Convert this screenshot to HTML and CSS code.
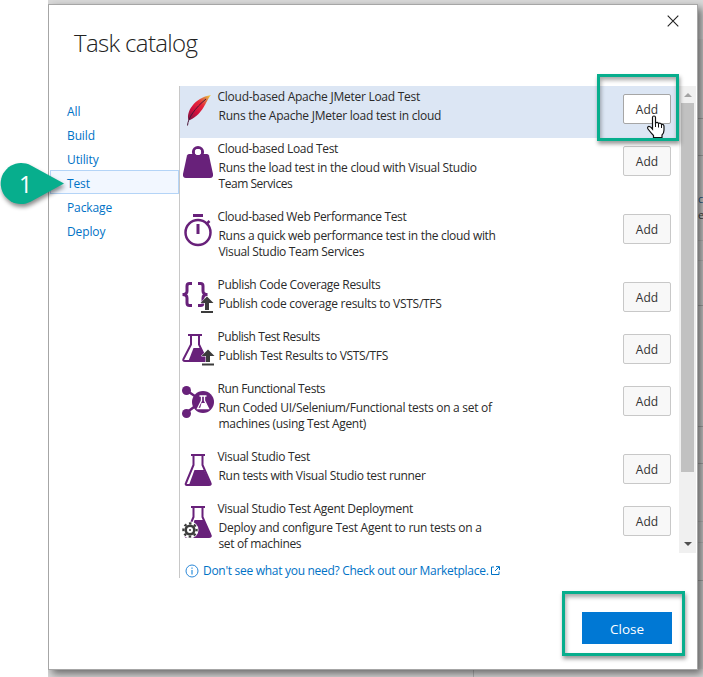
FILE: index.html
```html
<!DOCTYPE html>
<html lang="en">
<head>
<meta charset="utf-8">
<title>Task catalog</title>
<link rel="stylesheet" href="styles.css">
</head>
<body>
<div class="backdrop">
  <i class="shade"></i>
  <i class="rule r2"></i><i class="rule r3"></i><i class="rule soft r4"></i><i class="rule soft r5"></i><i class="rule r6"></i><i class="rule r7"></i><i class="rule r8"></i><i class="rule soft r9"></i><i class="rule soft r10"></i><i class="rule r11"></i>
  <i class="vrule"></i>
  <span class="peek p1">c</span><span class="peek p2">e</span>
</div>
<main class="dialog">
  <header class="head">
    <h1>Task catalog</h1>
    <svg class="x" viewBox="0 0 12 12" width="12" height="12"><path d="M.7.7l10.6 10.6M11.3.7L.7 11.3" stroke="#222" stroke-width="1.1"/></svg>
  </header>
  <div class="body">
    <nav class="nav">
      <a>All</a><a>Build</a><a>Utility</a><a class="on">Test</a><a>Package</a><a>Deploy</a>
    </nav>
    <section class="content">
      <div class="scroller">
        <div class="list">
          <article class="row hot">
            <svg class="icon" viewBox="0 0 36 44"><defs><linearGradient id="f" gradientUnits="userSpaceOnUse" x1="9" y1="34" x2="31" y2="9"><stop offset="0" stop-color="#7a1745"/><stop offset=".3" stop-color="#d00f3c"/><stop offset=".6" stop-color="#e8283a"/><stop offset=".8" stop-color="#dc7a45"/><stop offset="1" stop-color="#f6d83c"/></linearGradient></defs><path d="M8.500 34C6 26 14 12 31 9C25 16 24 27 10 34Z" fill="url(#f)"/><path d="M7.500 39.500C8 32 15 22 26 13" fill="none" stroke="#4b1638" stroke-width="1"/></svg>
            <div class="text"><h2 class="a1">Cloud-based Apache JMeter Load Test</h2><p><span class="b1">Runs the Apache JMeter load test in cloud</span></p></div>
            <button>Add</button>
          </article>
          <article class="row tall">
            <svg class="icon" viewBox="0 0 36 44"><circle cx="18" cy="14" r="4.600" fill="none" stroke="#68217a" stroke-width="3"/><path d="M9 16H27Q28.500 16 29 17.500L33 36Q33.500 40 30 40H6Q2.500 40 3 36L7 17.500Q7.500 16 9 16Z" fill="#68217a"/><circle cx="18" cy="14" r="3.100" fill="#fff"/></svg>
            <div class="text"><h2 class="a2">Cloud-based Load Test</h2><p><span class="b2">Runs the load test in the cloud with Visual Studio</span><br><span class="c2">Team Services</span></p></div>
            <button>Add</button>
          </article>
          <article class="row tall">
            <svg class="icon" viewBox="0 0 36 44"><circle cx="18" cy="26.500" r="12.500" fill="none" stroke="#68217a" stroke-width="2.500"/><path d="M13 8h10v3H13zM16.500 18h3v10h-3z" fill="#68217a"/><path d="M26 18.500l3.500-3.500" stroke="#68217a" stroke-width="2.500"/></svg>
            <div class="text"><h2 class="a3">Cloud-based Web Performance Test</h2><p><span class="b3">Runs a quick web performance test in the cloud with</span><br><span class="c3">Visual Studio Team Services</span></p></div>
            <button>Add</button>
          </article>
          <article class="row">
            <svg class="icon" viewBox="0 0 36 44"><path d="M12 9.500H9.500Q7 9.500 7 12V17Q7 20.500 2.500 20.500Q7 20.500 7 24V29Q7 31.500 9.500 31.500H12M18 9.500h2.500Q23 9.500 23 12V17Q23 20.500 27.500 20.500Q23 20.500 23 24V29Q23 31.500 20.500 31.500H18" fill="none" stroke="#68217a" stroke-width="3"/><path d="M27 22.500l6.500 6.500H29v7h-4v-7h-4.500zM21 37h12v2H21z" fill="#3c3c3c" stroke="#fff" stroke-width="1" paint-order="stroke"/></svg>
            <div class="text"><h2 class="a4">Publish Code Coverage Results</h2><p><span class="b4">Publish code coverage results to VSTS/TFS</span></p></div>
            <button>Add</button>
          </article>
          <article class="row">
            <svg class="icon" viewBox="0 0 36 44"><path d="M8 9H22M11 9V18.500L3.500 33Q2.500 35 5 35H25Q27 35 26 33L19 18.500V9" fill="none" stroke="#68217a" stroke-width="2"/><path d="M13.500 22H20.500L27 35H8.500Z" fill="#68217a"/><path d="M28 23.500l6.500 6.500H30v6h-4v-6h-4.500zM22 37.500h12v2H22z" fill="#3c3c3c" stroke="#fff" stroke-width="1" paint-order="stroke"/></svg>
            <div class="text"><h2 class="a5">Publish Test Results</h2><p><span class="b5">Publish Test Results to VSTS/TFS</span></p></div>
            <button>Add</button>
          </article>
          <article class="row tall">
            <svg class="icon" viewBox="0 0 36 44"><path d="M6 12L22 23L6 35" fill="none" stroke="#68217a" stroke-width="2.500"/><g fill="#68217a"><circle cx="6.500" cy="12.500" r="4.500"/><circle cx="6.500" cy="35.500" r="4.500"/><circle cx="23" cy="24" r="11"/></g><path d="M19.500 18h7M21.500 18v4.500L17.500 30.500H28.500L24.500 22.500V18" fill="none" stroke="#fff" stroke-width="1.300"/><path d="M21.500 25H25.500L28.500 30.500H20Z" fill="#fff"/></svg>
            <div class="text"><h2 class="a6">Run Functional Tests</h2><p><span class="b6">Run Coded UI/Selenium/Functional tests on a set of</span><br><span class="c6">machines (using Test Agent)</span></p></div>
            <button>Add</button>
          </article>
          <article class="row">
            <svg class="icon" viewBox="0 0 36 44"><path d="M11 9H25M13.500 9V19L6 37Q5 39 7 39H29Q31.500 39 30.500 37L22.500 19V9" fill="none" stroke="#68217a" stroke-width="2"/><path d="M14.500 24H24L31 39H9Z" fill="#68217a"/></svg>
            <div class="text"><h2 class="a7">Visual Studio Test</h2><p><span class="b7">Run tests with Visual Studio test runner</span></p></div>
            <button>Add</button>
          </article>
          <article class="row tall">
            <svg class="icon" viewBox="0 0 36 44"><path d="M11 9H25M13.500 9V19L6 37Q5 39 7 39H29Q31.500 39 30.500 37L22.500 19V9" fill="none" stroke="#68217a" stroke-width="2"/><path d="M14.500 22H24L31 39H9Z" fill="#68217a"/><circle cx="10" cy="32" r="8.500" fill="#fff"/><circle cx="10" cy="32" r="4.300" fill="none" stroke="#3c3c3c" stroke-width="2.600"/><circle cx="10" cy="32" r="6.600" fill="none" stroke="#3c3c3c" stroke-width="2.200" stroke-dasharray="2.600 2.584" stroke-dashoffset="1.300"/><circle cx="10" cy="32" r="1" fill="#3c3c3c"/></svg>
            <div class="text"><h2 class="a8">Visual Studio Test Agent Deployment</h2><p><span class="b8">Deploy and configure Test Agent to run tests on a</span><br><span class="c8">set of machines</span></p></div>
            <button>Add</button>
          </article>
        </div>
        <div class="bar"><i class="up"></i><i class="thumb"></i><i class="down"></i></div>
      </div>
      <a class="market">
        <svg width="14" height="14" viewBox="0 0 14 14"><circle cx="7" cy="7" r="6" fill="none" stroke="#2b88d8"/><path d="M7 6v4.500M7 3.500v1.300" stroke="#0078d4"/></svg>
        <span class="m">Don't see what you need? Check out our Marketplace.</span>
        <svg class="ext" width="9" height="9" viewBox="0 0 9 9"><path d="M3 1H.5v7.500H8V5.500M4 5l4-4M5 .6h3.500V4" fill="none" stroke="#0072c6"/></svg>
      </a>
    </section>
  </div>
  <footer class="foot"><button class="close">Close</button></footer>
</main>
<svg class="hand" width="20" height="24" viewBox="0 0 20 24"><path d="M6.500 13V2.500Q6.500 1 8 1T9.500 2.500V8Q11.500 6.500 12.500 8.500Q14.500 7.500 15.500 9.500Q18 9 18 11.500V15Q18 18 16 20V22.500H7.500V20.500Q5 18 2 14Q1 12 2.500 11.500Q4 11 6.500 14Z" fill="#fff" stroke="#111" stroke-width="1.200"/><path d="M9.500 8v4M12.500 9v3.500M15.500 10v3" stroke="#111"/></svg>
<div class="mark mark-add"></div>
<div class="mark mark-close"></div>
<svg class="callout" width="76" height="60" viewBox="0 0 76 60"><path d="M64 23.500L31 5.500A20.500 20.500 0 1 0 31 41.500Z" fill="#07ae8d"/></svg>
<span class="num">1</span>
</body>
</html>
```
FILE: styles.css
```css
* { box-sizing: border-box; }
body { margin: 0; width: 703px; height: 677px; overflow: hidden; position: relative; background: #fff; font: 12px/16px "Open Sans", "Noto Sans", sans-serif; color: #2a2a2a; }
h1, h2, p { margin: 0; font-weight: 400; }
.backdrop { position: absolute; left: 48px; top: 0; right: 0; bottom: 0; background: #d9d9d9; overflow: hidden; }
.shade { position: absolute; right: 0; top: 39px; bottom: 8px; width: 7px; background: #d0d0d0; }
.rule { position: absolute; right: 0; width: 7px; height: 1px; background: #a9a9a9; }
.soft { background: #bebebe; }
.r2 { top: 118px; } .r3 { top: 155px; } .r4 { top: 240px; } .r5 { top: 260px; } .r6 { top: 305px; } .r7 { top: 426px; } .r8 { top: 463px; } .r9 { top: 521px; } .r10 { top: 542px; } .r11 { top: 580px; }
.vrule { position: absolute; left: 425px; bottom: 0; width: 1px; height: 8px; background: #b5b5b5; }
.peek { position: absolute; font-size: 11px; letter-spacing: -1px; }
.p1 { top: 191px; left: 650px; color: #2a5c8a; }
.p2 { top: 207px; left: 650px; color: #444; }
.dialog { position: absolute; left: 48px; top: 4px; width: 650px; height: 666px; background: #fff; border: 1px solid #a6a6a6; box-shadow: 4px 4px 8px rgba(0,0,0,.5); clip-path: inset(-4px -5px -7px 0); }
.head { height: 81px; display: flex; justify-content: space-between; padding: 10px 18px 0 25px; }
h1 { font-size: 24px; line-height: 55px; font-weight: 300; color: #222; letter-spacing: -.65px; }
.x { display: block; }
.body { display: flex; height: 492px; }
.nav { width: 130px; padding: 12px 0 0 1px; }
.nav a { display: block; height: 24px; line-height: 26px; border: 1px solid transparent; padding-left: 16px; color: #0072c6; letter-spacing: -.12px; }
.nav .on { background: #f2f7ff; border-color: #b4d4f7; }
.content { flex: 1; border-left: 1px solid #c8c8c8; }
.scroller { display: flex; height: 467px; width: 516px; overflow: hidden; }
.list { width: 499px; height: 467px; overflow: hidden; }
.row { display: flex; height: 52px; }
.tall { height: 68px; }
.hot { background: #dce6f4; }
.icon { width: 36px; height: 44px; flex: none; }
.text { flex: 1; padding: 3px 0 0 1.5px; white-space: nowrap; }
h2 { font-size: 12px; line-height: 16px; }
p { margin-top: 3px; padding-left: 1px; letter-spacing: -.27px; }
.a1 { letter-spacing: -.26px; } .a2 { letter-spacing: -.32px; } .a3 { letter-spacing: -.37px; } .a4 { letter-spacing: -.31px; }
.a5 { letter-spacing: -.43px; } .a6 { letter-spacing: -.4px; } .a7 { letter-spacing: -.33px; } .a8 { letter-spacing: -.29px; }
.b1 { letter-spacing: -.24px; } .b3 { letter-spacing: -.31px; } .b5 { letter-spacing: -.31px; } .b6 { letter-spacing: -.28px; } .b7 { letter-spacing: -.32px; } .b8 { letter-spacing: -.27px; }
.c2 { letter-spacing: -.46px; } .c3 { letter-spacing: -.34px; } .c6 { letter-spacing: -.31px; } .c8 { letter-spacing: -.35px; }
button { font: 12px "Open Sans", sans-serif; color: #333; }
.row button { width: 48px; height: 30px; margin: 8px 8px 0 0; padding: 0; border: 1px solid #c8c8c8; border-radius: 2px; background: #f8f8f8; }
.row.hot button { background: #fff; border-color: #a6a6a6; }
.bar { width: 17px; background: #f0f0f0; display: flex; flex-direction: column; align-items: center; }
.up { margin: 7px 0 6px; border: 4px solid transparent; border-top: 0; border-bottom: 4px solid #a3a3a3; }
.thumb { width: 13px; height: 369px; background: #c1c1c1; }
.down { margin-top: 70px; border: 4px solid transparent; border-bottom: 0; border-top: 4px solid #505050; }
.market { display: flex; align-items: center; height: 25px; padding: 10px 0 0 5px; color: #0072c6; gap: 3px; white-space: nowrap; }
.m { letter-spacing: -.29px; padding-left: 1px; }
.ext { margin: 0 0 1px -1px; }
.foot { display: flex; justify-content: flex-end; padding: 34px 25px 0 0; }
.close { width: 90px; height: 32px; border: 0; background: #0078d4; color: #fff; font-size: 13.5px; padding-top: 3px; }
.mark { position: absolute; border: 3px solid #07ae8d; box-shadow: 1px 3px 4px rgba(0,0,0,.4), inset 1px 3px 4px rgba(0,0,0,.35); }
.mark-add { left: 597px; top: 74px; width: 82px; height: 67px; }
.mark-close { left: 562px; top: 591px; width: 123px; height: 65px; }
.callout { position: absolute; left: 0; top: 160px; filter: drop-shadow(1px 3px 2px rgba(0,0,0,.45)); }
.num { position: absolute; left: 19px; top: 172px; color: #fff; font-size: 23px; line-height: 24px; }
.hand { position: absolute; left: 646px; top: 115px; }
```
